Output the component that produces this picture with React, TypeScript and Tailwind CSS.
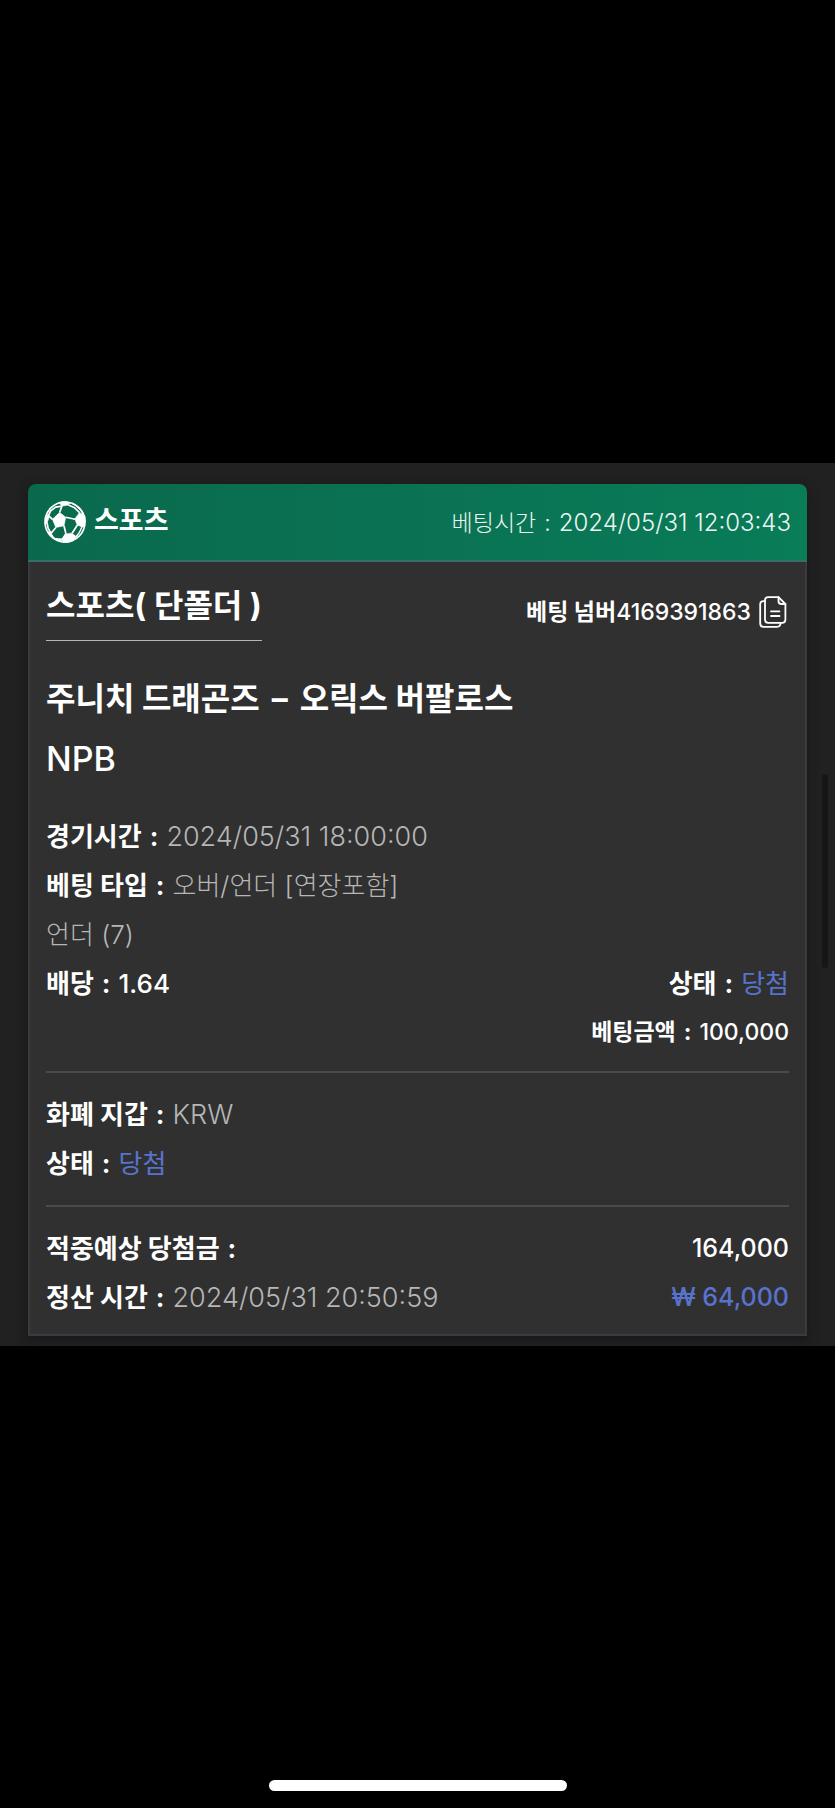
import type { ReactNode } from "react";

const fontStack = "font-['Inter','Noto_Sans_CJK_KR',sans-serif]";

function SoccerBall() {
  return (
    <svg viewBox="0 0 124 124" className="h-[42px] w-[42px]" aria-hidden="true">
      <circle cx="62" cy="62" r="59" fill="none" stroke="#fff" strokeWidth="5" />
      <g fill="#fff" stroke="#fff" strokeWidth="2" strokeLinejoin="round">
        <path d="M46 34 64 48 59 73 35 78 25 54Z" />
        <path d="M105 34 121 44Q124 60 118 76L112 77 98 70 91 53Z" />
        <path d="M44 4Q62 -1 78 5L72 12 53 15Z" />
        <path d="M4 46 12 40 16 46 9 64 4 70Z" />
        <path d="M62 98 82 95 95 105 86 117Q72 124 56 122L54 113Z" />
        <path d="M10 90 20 93 27 105 36 113 50 116 58 121Q26 119 10 90Z" />
      </g>
      <g fill="none" stroke="#fff" strokeWidth="5" strokeLinejoin="round">
        <path d="M46 34 53 15M64 48 92 54M59 73 65 98M35 78 21 95M25 54 14 44" />
        <path d="M53 15 34 18 19 30 13 44M72 12 89 19 105 34M99 70 83 95M9 64 12 80 20 94M65 98 54 113 34 112" />
        <path d="M82 6Q102 14 116 38M112 77Q106 94 94 106" strokeWidth="4" />
      </g>
    </svg>
  );
}

function CopyIcon() {
  return (
    <svg viewBox="0 0 28 32" className="h-8 w-7" fill="none" stroke="currentColor" strokeWidth="1.8" strokeLinecap="round" strokeLinejoin="round" aria-hidden="true">
      <path d="M9.2 1.2H19.5L26.4 8V23.5Q26.4 26.8 23.2 26.8H9.2Q6 26.8 6 23.5V4.5Q6 1.2 9.2 1.2Z" />
      <path d="M19.5 1.2V5Q19.5 8 22.5 8H26.4" />
      <path d="M6 5.2H4.5Q1.2 5.2 1.2 8.5V27.5Q1.2 30.8 4.5 30.8H18Q21.4 30.8 21.6 27" />
      <path d="M12 15.3H20.5M12 20H20.5" />
    </svg>
  );
}

function Field({ label, children }: { label: string; children?: ReactNode }) {
  return (
    <div className="flex gap-2">
      <dt className="flex gap-2 font-bold text-white">
        {label} <span>:</span>
      </dt>
      {children && <dd>{children}</dd>}
    </div>
  );
}

export default function App() {
  return (
    <div className={`relative flex min-h-screen flex-col justify-center bg-black text-white ${fontStack}`}>
      <main className="relative bg-[#212121] px-7 pt-[21px] pb-[10px]">
        <article className="rounded-t-lg shadow-[0_3px_10px_2px_rgba(24,24,28,0.9)]">
          <header className="flex h-[78px] items-center justify-between rounded-t-lg border-b-2 border-[#336f66] bg-linear-to-r from-[#0a694d] to-[#097c58] px-4">
            <h1 className="flex items-center gap-2 text-[27px] font-bold">
              <SoccerBall />
              스포츠
            </h1>
            <p className="flex items-baseline gap-2 pt-1 text-[23px] font-light text-[#ecf6f2]">
              베팅시간 <span>:</span>
              <time className="text-2xl">2024/05/31 12:03:43</time>
            </p>
          </header>

          <div className="border-2 border-t-0 border-[#3b3b3f] bg-[#303030] px-4 pt-5 pb-3">
            <div className="flex items-start justify-between">
              <h2 className="border-b border-[#b5b5b5] pb-[10px] text-[32px] leading-[48px] font-bold">
                스포츠( 단폴더 )
              </h2>
              <div className="flex items-center gap-2 pt-3 pr-0.5 text-[23px] leading-9 font-medium">
                <span>
                  <span className="font-bold">베팅 넘버</span>4169391863
                </span>
                <button type="button" aria-label="복사">
                  <CopyIcon />
                </button>
              </div>
            </div>

            <h3 className="mt-7 flex gap-3 text-[32px] leading-[60px] font-bold">
              주니치 드래곤즈 <span>–</span> <span>오릭스 버팔로스</span>
            </h3>
            <p className="text-[34px] leading-[60px] font-medium">NPB</p>

            <dl className="mt-[23px] text-[26px] leading-[49px] font-light text-[#b6b6b6]">
              <Field label="경기시간">
                <time className="text-[27px]">2024/05/31 18:00:00</time>
              </Field>
              <Field label="베팅 타입">오버/언더 [연장포함]</Field>
              <div>
                <dd>언더 (7)</dd>
              </div>
              <div className="flex justify-between">
                <Field label="배당">
                  <span className="font-medium text-white">1.64</span>
                </Field>
                <Field label="상태">
                  <span className="font-normal text-[#5873cb]">당첨</span>
                </Field>
              </div>
              <div className="flex justify-end gap-2 text-[23px] leading-[49px] font-medium text-white">
                <dt className="flex gap-2 font-bold">
                  베팅금액 <span>:</span>
                </dt>
                <dd>100,000</dd>
              </div>
            </dl>

            <dl className="mt-[14px] border-t-2 border-[#4a4a4a] py-[17px] text-[26px] leading-[49px] font-light text-[#b6b6b6]">
              <Field label="화폐 지갑">
                <span className="text-[27px]">KRW</span>
              </Field>
              <Field label="상태">
                <span className="font-normal text-[#5873cb]">당첨</span>
              </Field>
            </dl>

            <dl className="border-t-2 border-[#4a4a4a] pt-[17px] text-[26px] leading-[49px] font-light text-[#b6b6b6]">
              <div className="flex justify-between">
                <Field label="적중예상 당첨금" />
                <dd className="text-[25px] font-medium text-white">164,000</dd>
              </div>
              <div className="flex justify-between">
                <Field label="정산 시간">
                  <time className="text-[27px]">2024/05/31 20:50:59</time>
                </Field>
                <dd className="text-[25px] font-medium text-[#5873cb]">₩ 64,000</dd>
              </div>
            </dl>
          </div>
        </article>
        <div className="absolute top-[311px] right-[7px] h-[194px] w-[6px] rounded-full bg-[#161616]" />
      </main>
      <div className="absolute bottom-[17px] left-1/2 h-[11px] w-[298px] -translate-x-1/2 rounded-full bg-white" />
    </div>
  );
}
